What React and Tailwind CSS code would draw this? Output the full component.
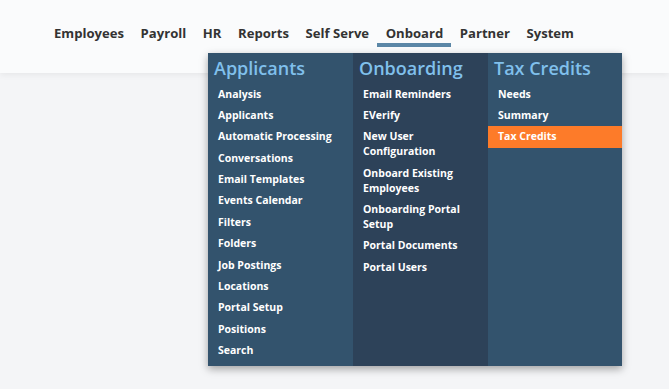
import React from 'react';

const navItems = ['Employees', 'Payroll', 'HR', 'Reports', 'Self Serve', 'Onboard', 'Partner', 'System'];

const columns = [
  {
    title: 'Applicants',
    bg: 'bg-[#33536d]',
    width: 'w-[145px]',
    items: [
      'Analysis', 'Applicants', 'Automatic Processing', 'Conversations', 'Email Templates',
      'Events Calendar', 'Filters', 'Folders', 'Job Postings', 'Locations', 'Portal Setup',
      'Positions', 'Search',
    ],
  },
  {
    title: 'Onboarding',
    bg: 'bg-[#2d4259]',
    width: 'w-[135px]',
    items: [
      'Email Reminders', 'EVerify', 'New User Configuration', 'Onboard Existing Employees',
      'Onboarding Portal Setup', 'Portal Documents', 'Portal Users',
    ],
  },
  {
    title: 'Tax Credits',
    bg: 'bg-[#33536d]',
    width: 'w-[134px]',
    items: ['Needs', 'Summary', 'Tax Credits'],
    active: 'Tax Credits',
  },
];

const App = () => {
  return (
    <div className="min-h-screen bg-[#f4f5f7] font-['Open_Sans',sans-serif]">
      {/* top bar */}
      <div className="relative h-[73px] bg-[#fafbfc] shadow-[0_2px_6px_rgba(0,0,0,0.06)]">
        <nav className="flex pl-[54px] pt-[23px]">
          {navItems.map((item) => (
            <div key={item} className="relative mr-[16.6px] flex flex-col items-center">
              <span className="text-[13.1px] font-bold leading-[20px] text-[#333]">{item}</span>
              {item === 'Onboard' && (
                <div className="absolute top-[20px] h-[4px] w-[74px] bg-[#5b87a7]" />
              )}
            </div>
          ))}
        </nav>

        {/* dropdown */}
        <div className="absolute left-[208px] top-[53px] z-10 flex h-[313px] shadow-[0_3px_8px_rgba(0,0,0,0.35)]">
          {columns.map((col) => (
            <div key={col.title} className={`${col.bg} ${col.width}`}>
              <div className="pl-[6px] pt-[3px] pb-[3.5px] text-[18px] font-semibold leading-[24px] text-[#80c0ec]">
                {col.title}
              </div>
              <ul>
                {col.items.map((it) => (
                  <li
                    key={it}
                    className={`px-[10px] pt-[3px] pb-[3.4px] text-[10.5px] font-bold leading-[15px] text-white ${
                      col.active === it ? 'bg-[#fd7b29]' : ''
                    }`}
                  >
                    {it}
                  </li>
                ))}
              </ul>
            </div>
          ))}
        </div>
      </div>
    </div>
  );
};

export default App;
